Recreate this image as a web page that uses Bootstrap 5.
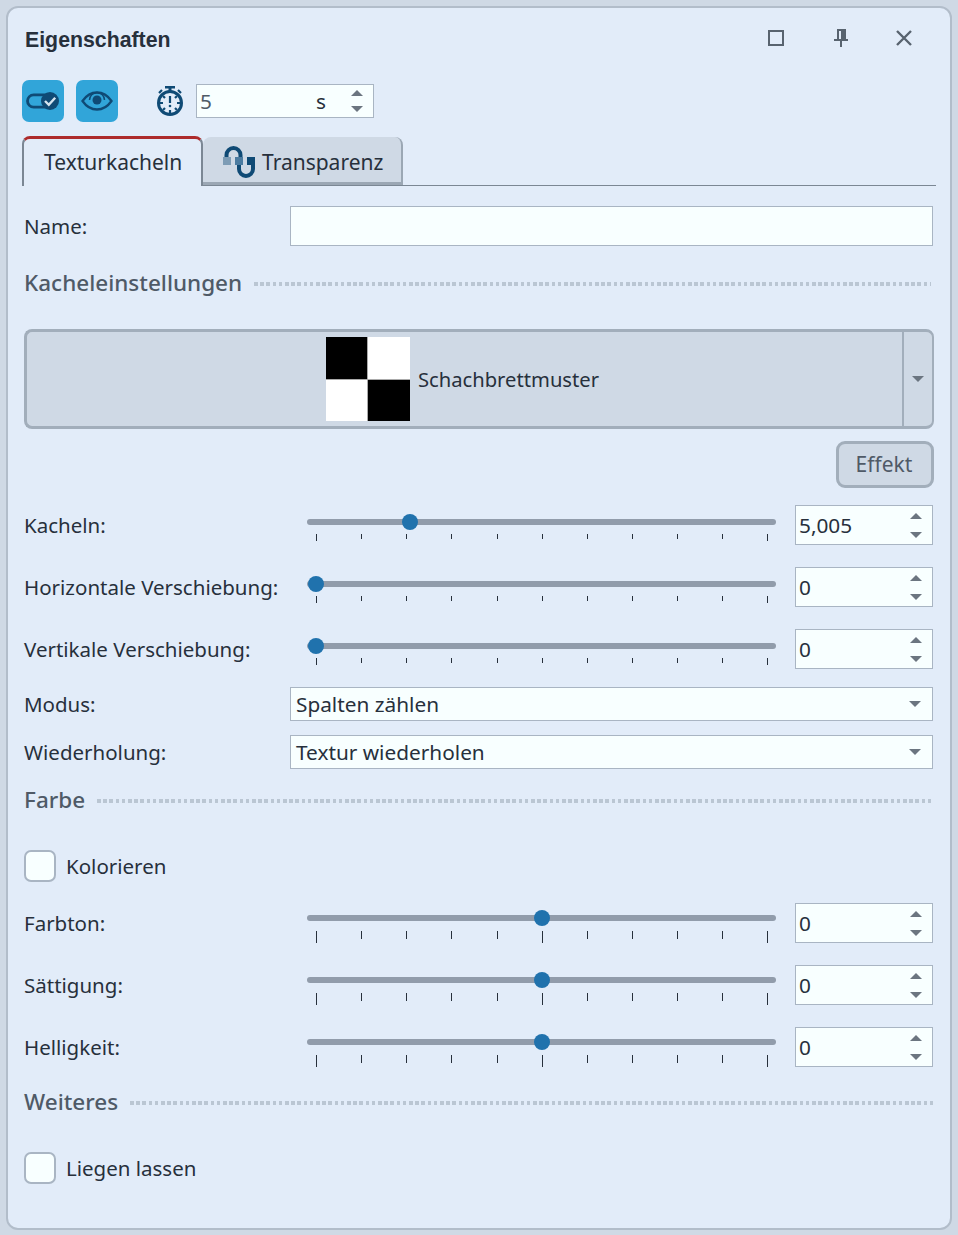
<!DOCTYPE html>
<html lang="de">
<head>
<meta charset="utf-8">
<title>Eigenschaften</title>
<link href="https://cdn.jsdelivr.net/npm/bootstrap@5.3.0/dist/css/bootstrap.min.css" rel="stylesheet">
<style>
html,body{height:100%;}
body{background:#cfd9e5;font-family:"Noto Sans","Open Sans",sans-serif;font-size:20.5px;color:#27303c;line-height:1.2;margin:0;overflow:hidden;}
.win{position:relative;margin:6px 6px 0 6px;height:1224px;width:946px;background:#e2ecf9;border:2px solid #b2bdca;border-radius:12px;padding:0 16px 0 16px;}
.win-title{height:61px;}
.win-title h1{font:bold 21.3px "Liberation Sans",sans-serif;margin:3px 0 0 1px;color:#27303c;}
.win-ctrls{padding:0 21px 1px 0;}
.win-ctrls .c1{margin-right:50px;}
.win-ctrls .c2{margin-right:47px;}
.tool{width:42px;height:42px;border-radius:7px;background:#31a5d9;border:0;padding:0;}
.toolbar{height:42px;margin-top:11px;margin-left:-2px;}
.field{background:#f8ffff;border:1px solid #a9b5c3;height:40px;padding:0 3px;font-size:20.8px;}
.ftxt{padding-top:1px;}
.spin{width:12px;gap:13px;}
.spin.tight{gap:10px;}
.spin i{display:block;width:0;height:0;border-left:6px solid transparent;border-right:6px solid transparent;}
.spin i:first-child{border-bottom:6px solid #6b7580;}
.spin i:last-child{border-top:6px solid #6b7580;}
.tabs{height:50px;margin:14px -2px 0 -2px;border-bottom:1px solid #7b8794;}
.tb{height:50px;font-size:21px;}
.tb-on{width:181px;background:#e2ecf9;border:2px solid #7b8794;border-top:3px solid #ad2b2c;border-bottom:0;border-radius:8px 8px 0 0;padding:0 0 0 20px;margin-bottom:-1px;height:50px;}
.tb-off{width:200px;height:48px;margin-top:1px;background:#cfd9e5;border-right:2px solid #9ba7b4;border-bottom:3px solid #9ba7b4;border-radius:8px 8px 0 0;padding:7px 0 0 20px;}
.tb-off svg{margin-top:-3px;}
.row-name{margin-top:20px;height:40px;}
.lbl{width:266px;flex:none;padding-top:1px;}
.grow{flex:1 1 auto;}
.sect{font-size:22.5px;font-weight:500;color:#4f5a67;white-space:nowrap;gap:12px;height:30px;padding-bottom:2px;}
.sect span{flex:1 1 auto;height:4px;margin-top:3px;background:repeating-linear-gradient(90deg,#bac6d3 0 3.600px,transparent 3.600px 6.200px);}
.big{margin-top:30px;height:100px;}
.big-main{flex:1 1 auto;background:#cfd9e5;border:3px solid #a2aebb;border-right:0;border-radius:8px 0 0 8px;gap:8px;padding-right:4px;}
.big-main .stxt{font-size:20.2px;}
.big-drop{width:32px;flex:none;background:#cfd9e5;border:2px solid #a2aebb;border-top-width:3px;border-bottom-width:3px;border-radius:0 8px 8px 0;}
.caret{display:block;width:0;height:0;border-left:6px solid transparent;border-right:6px solid transparent;border-top:6px solid #6b7580;}
.check{width:84px;height:84px;display:grid;grid-template-columns:1fr 1fr;gap:1px;background:#aaa;}
.check b{background:#000;}
.check u{background:#fff;}
.effekt{margin-top:12px;height:47px;width:98px;background:#cfd9e5;border:3px solid #a2aebb;border-radius:9px;color:#4f5a67;font-size:21px;padding:0 2px 0 0;}
.srow{height:40px;margin-bottom:22px;}
.srow .slbl{width:266px;flex:none;padding-top:1px;}
.track-wrap{width:469px;margin-left:17px;flex:none;position:relative;height:40px;}
.track{position:absolute;left:0;right:0;top:14px;height:6px;background:#919cab;border-radius:3px;}
.thumb{position:absolute;top:9px;width:16px;height:16px;margin-left:-8px;border-radius:50%;background:#2072ad;}
.hi .track{top:12px;}
.hi .thumb{top:7px;}
.ticks{position:absolute;left:9px;right:7.500px;top:29px;height:8px;display:flex;justify-content:space-between;align-items:flex-start;}
.ticks i{display:block;width:1px;height:5px;background:#27303c;}
.ticks i.lg{height:7px;}
.ticks.tall{top:28px;height:12px;}
.ticks.tall i{height:8px;}
.ticks.tall i.lg{height:12px;}
.num{width:138px;margin-left:19px;flex:none;}
.num .spin{margin-right:7px;}
.sel{flex:1 1 auto;height:34px;padding:0 11px 0 5px;margin-right:1px;}
.selrow{height:34px;margin-bottom:14px;}
.cb{width:32px;height:32px;background:#f8ffff;border:2px solid #a9b5c3;border-radius:7px;}
.cbrow{height:32px;gap:10px;}
</style>
</head>
<body>
<div class="win">
  <div class="win-title d-flex align-items-center justify-content-between">
    <h1>Eigenschaften</h1>
    <div class="win-ctrls d-flex align-items-center">
      <svg class="c1" width="16" height="16" viewBox="0 0 16 16"><rect x="1" y="1" width="14" height="14" fill="none" stroke="#58636f" stroke-width="2"/></svg>
      <svg class="c2" width="14" height="18" viewBox="0 0 14 18"><path d="M3 0h9v10h2v2H8v6H6v-6H0v-2h3z" fill="#58636f"/><path d="M5 2h2v8H5z" fill="#e2ecf9"/></svg>
      <svg width="18" height="18" viewBox="0 0 18 18"><path d="M2 2l14 14M16 2L2 16" stroke="#58636f" stroke-width="2.4" fill="none"/></svg>
    </div>
  </div>

  <div class="toolbar d-flex align-items-center">
    <button class="tool d-flex align-items-center justify-content-center" type="button" aria-label="Aktiv">
      <svg width="34" height="22" viewBox="0 0 34 22"><rect x="1.500" y="4.800" width="26" height="12.400" rx="6.200" fill="none" stroke="#0f4a75" stroke-width="2.800"/><circle cx="24" cy="11" r="9" fill="#0f4a75"/><path d="M19 11l3.800 3.800 6.400-7" fill="none" stroke="#d5e4ef" stroke-width="2.400"/></svg>
    </button>
    <button class="tool d-flex align-items-center justify-content-center" type="button" aria-label="Sichtbar" style="margin-left:12px">
      <svg width="32" height="22" viewBox="0 0 32 22"><path d="M1.500 11C6 4.500 11 2.500 16 2.500S26 4.500 30.500 11C26 17.500 21 19.500 16 19.500S6 17.500 1.500 11z" fill="none" stroke="#0f4a75" stroke-width="2.300"/><circle cx="16" cy="10" r="4.500" fill="#0f4a75"/><path d="M8.500 10a7.500 7.500 0 0 1 15 0" fill="none" stroke="#0f4a75" stroke-width="1.500"/></svg>
    </button>
    <svg width="28" height="32" viewBox="0 0 28 32" style="margin-left:38px"><path d="M9 1h10v2.500h-3.500V7h-3V3.500H9z" fill="#0f4a75"/><circle cx="14" cy="18" r="11.500" fill="none" stroke="#0f4a75" stroke-width="3"/><path d="M14 11v7" stroke="#0f4a75" stroke-width="2.200"/><circle cx="14" cy="21" r="1.300" fill="#0f4a75"/><path d="M14 25v3M7 18H4M24 18h-3M9 23l-2 2M19 23l2 2M9 13l-2-2M19 13l2-2M3 8l3-3M25 8l-3-3" stroke="#0f4a75" stroke-width="2.200"/></svg>
    <div class="field d-flex align-items-center" style="width:178px;height:34px;margin-left:12px;padding-right:10px">
      <span class="ftxt" style="color:#4f5a67">5</span>
      <span class="ftxt" style="margin-left:104px">s</span>
      <span class="spin tight d-flex flex-column ms-auto"><i></i><i></i></span>
    </div>
  </div>

  <div class="tabs d-flex align-items-start">
    <div class="tb tb-on d-flex align-items-center">Texturkacheln</div>
    <div class="tb tb-off d-flex align-items-center" style="gap:6px">
      <svg width="33" height="32" viewBox="0 0 33 32"><path d="M3.500 10V8a7 7 0 0 1 14 0v3" fill="none" stroke="#0f4a75" stroke-width="4" transform="translate(0,1)"/><path d="M16 17v6a7 7 0 0 0 14 0v-6" fill="none" stroke="#0f4a75" stroke-width="4"/><rect x="0" y="11" width="8" height="8" fill="#7d9cb5"/><rect x="12" y="11" width="8" height="8" fill="#4b7ba0"/><rect x="24" y="11" width="8" height="8" fill="#0f4a75"/></svg>
      <span>Transparenz</span>
    </div>
  </div>

  <div class="row-name d-flex align-items-center">
    <div class="lbl">Name:</div>
    <div class="field grow" style="margin-right:1px"></div>
  </div>

  <div class="sect d-flex align-items-center" style="margin-top:22px">Kacheleinstellungen<span style="margin-right:3px"></span></div>

  <div class="big d-flex" style="margin-top:31px">
    <div class="big-main d-flex align-items-center justify-content-center">
      <div class="check"><b></b><u></u><u></u><b></b></div>
      <span class="stxt">Schachbrettmuster</span>
    </div>
    <div class="big-drop d-flex align-items-center justify-content-center"><span class="caret"></span></div>
  </div>

  <div class="d-flex justify-content-end" style="margin-bottom:17px">
    <button type="button" class="effekt">Effekt</button>
  </div>

  <div class="srow d-flex align-items-center">
    <div class="slbl">Kacheln:</div>
    <div class="track-wrap"><div class="track"></div><div class="thumb" style="left:103px"></div>
      <div class="ticks"><i class="lg"></i><i></i><i></i><i></i><i></i><i></i><i></i><i></i><i></i><i></i><i class="lg"></i></div></div>
    <div class="field num d-flex align-items-center"><span class="ftxt">5,005</span><span class="spin d-flex flex-column ms-auto"><i></i><i></i></span></div>
  </div>
  <div class="srow d-flex align-items-center">
    <div class="slbl">Horizontale Verschiebung:</div>
    <div class="track-wrap"><div class="track"></div><div class="thumb" style="left:9px"></div>
      <div class="ticks"><i class="lg"></i><i></i><i></i><i></i><i></i><i></i><i></i><i></i><i></i><i></i><i class="lg"></i></div></div>
    <div class="field num d-flex align-items-center"><span class="ftxt">0</span><span class="spin d-flex flex-column ms-auto"><i></i><i></i></span></div>
  </div>
  <div class="srow d-flex align-items-center" style="margin-bottom:18px">
    <div class="slbl">Vertikale Verschiebung:</div>
    <div class="track-wrap"><div class="track"></div><div class="thumb" style="left:9px"></div>
      <div class="ticks"><i class="lg"></i><i></i><i></i><i></i><i></i><i></i><i></i><i></i><i></i><i></i><i class="lg"></i></div></div>
    <div class="field num d-flex align-items-center"><span class="ftxt">0</span><span class="spin d-flex flex-column ms-auto"><i></i><i></i></span></div>
  </div>

  <div class="selrow d-flex align-items-center">
    <div class="lbl">Modus:</div>
    <div class="field sel d-flex align-items-center justify-content-between"><span class="ftxt">Spalten zählen</span><span class="caret"></span></div>
  </div>
  <div class="selrow d-flex align-items-center">
    <div class="lbl">Wiederholung:</div>
    <div class="field sel d-flex align-items-center justify-content-between"><span class="ftxt">Textur wiederholen</span><span class="caret"></span></div>
  </div>

  <div class="sect d-flex align-items-center" style="margin-top:16px">Farbe<span></span></div>

  <div class="cbrow d-flex align-items-center" style="margin-top:35px"><div class="cb"></div><span class="ftxt">Kolorieren</span></div>

  <div class="srow hi d-flex align-items-center" style="margin-top:21px">
    <div class="slbl">Farbton:</div>
    <div class="track-wrap"><div class="track"></div><div class="thumb" style="left:235px"></div>
      <div class="ticks tall"><i class="lg"></i><i></i><i></i><i></i><i></i><i class="lg"></i><i></i><i></i><i></i><i></i><i class="lg"></i></div></div>
    <div class="field num d-flex align-items-center"><span class="ftxt">0</span><span class="spin d-flex flex-column ms-auto"><i></i><i></i></span></div>
  </div>
  <div class="srow hi d-flex align-items-center">
    <div class="slbl">Sättigung:</div>
    <div class="track-wrap"><div class="track"></div><div class="thumb" style="left:235px"></div>
      <div class="ticks tall"><i class="lg"></i><i></i><i></i><i></i><i></i><i class="lg"></i><i></i><i></i><i></i><i></i><i class="lg"></i></div></div>
    <div class="field num d-flex align-items-center"><span class="ftxt">0</span><span class="spin d-flex flex-column ms-auto"><i></i><i></i></span></div>
  </div>
  <div class="srow hi d-flex align-items-center" style="margin-bottom:20px">
    <div class="slbl">Helligkeit:</div>
    <div class="track-wrap"><div class="track"></div><div class="thumb" style="left:235px"></div>
      <div class="ticks tall"><i class="lg"></i><i></i><i></i><i></i><i></i><i class="lg"></i><i></i><i></i><i></i><i></i><i class="lg"></i></div></div>
    <div class="field num d-flex align-items-center"><span class="ftxt">0</span><span class="spin d-flex flex-column ms-auto"><i></i><i></i></span></div>
  </div>

  <div class="sect d-flex align-items-center">Weiteres<span></span></div>
  <div class="cbrow d-flex align-items-center" style="margin-top:35px"><div class="cb"></div><span class="ftxt">Liegen lassen</span></div>
</div>
<script src="https://cdn.jsdelivr.net/npm/bootstrap@5.3.0/dist/js/bootstrap.bundle.min.js"></script>
</body>
</html>
